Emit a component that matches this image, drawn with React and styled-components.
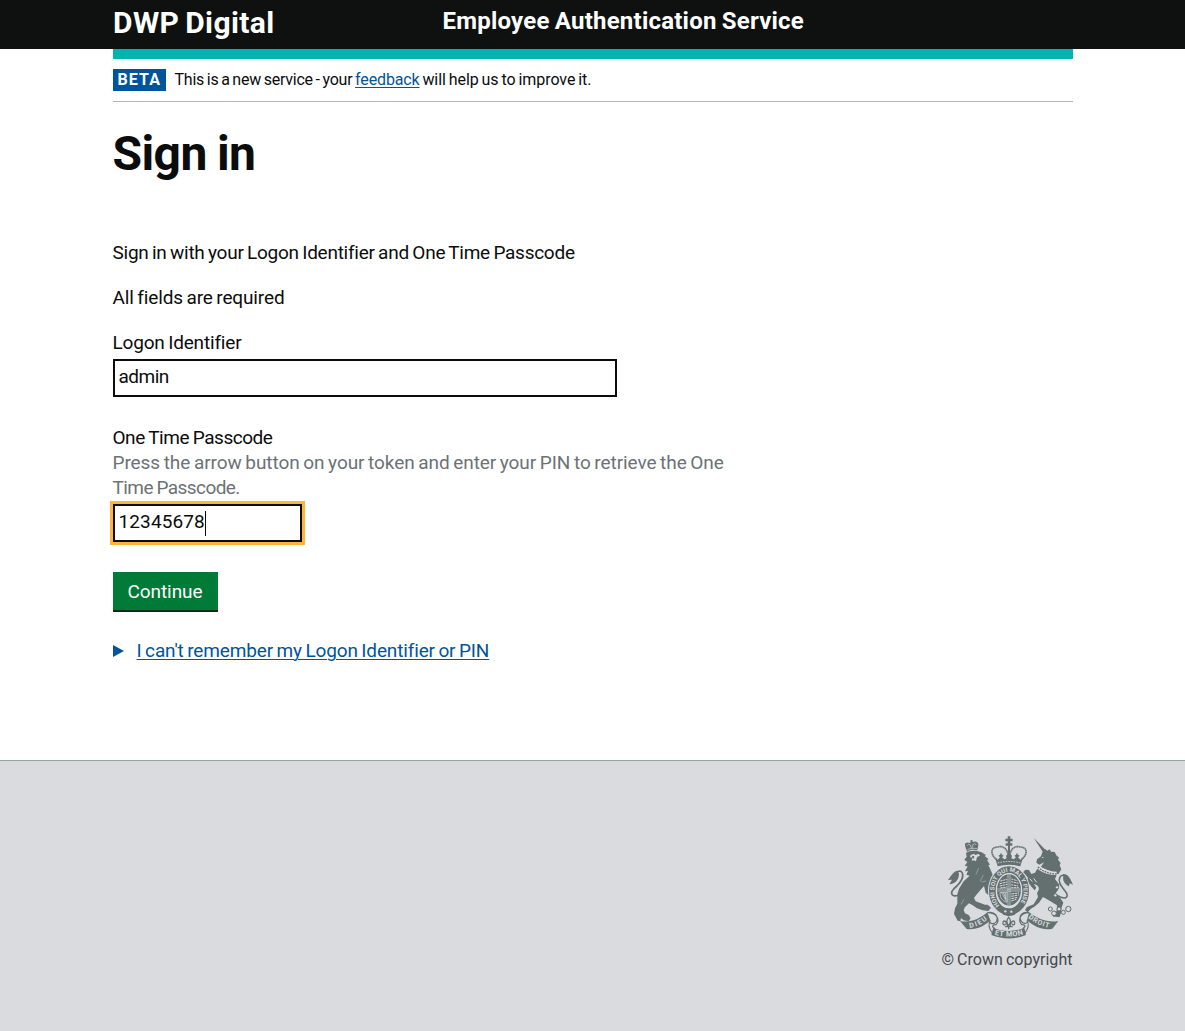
import React from "react";
import styled, { createGlobalStyle } from "styled-components";

const GlobalStyle = createGlobalStyle`
  * { box-sizing: border-box; }
  html, body { margin: 0; background: #fff; }
  body {
    font-family: Roboto, "Liberation Sans", sans-serif;
    font-size: 19px;
    line-height: 25px;
    color: #0b0c0c;
    word-spacing: -1px;
  }
`;

const Page = styled.div`
  min-height: 1031px;
  display: flex;
  flex-direction: column;
`;

const Container = styled.div`
  width: 960px;
  margin: 0 auto;
`;

const Text = styled.span`
  letter-spacing: ${(p) => p.$track || 0}px;
  word-spacing: ${(p) => (p.$words === undefined ? -1 : p.$words)}px;
`;

const Header = styled.header`
  background: #0e1110;
  height: 49px;
  color: #fff;
`;

const HeaderRow = styled(Container)`
  display: flex;
  align-items: flex-start;
`;

const Logo = styled.div`
  width: 330px;
  padding: 8px 0 0 0.5px;
  font-size: 30px;
  line-height: 30px;
  font-weight: 700;
  letter-spacing: 0.4px;
  word-spacing: -2px;
`;

const ServiceName = styled.div`
  padding-top: 6px;
  font-size: 24px;
  line-height: 30px;
  font-weight: 700;
  letter-spacing: 0.22px;
`;

const BrandBar = styled.div`
  height: 10px;
  background: #00b5b0;
`;

const PhaseBanner = styled.div`
  display: flex;
  align-items: flex-start;
  height: 43px;
  padding-top: 10px;
  border-bottom: 1px solid #b3b6b8;
  font-size: 16px;
  line-height: 22px;
  white-space: pre;
`;

const PhaseTag = styled.strong`
  width: 53px;
  height: 22px;
  margin-right: 9px;
  padding-left: 5px;
  background: #00549b;
  color: #fff;
  letter-spacing: 1.1px;
`;

const Link = styled.a`
  color: #00549b;
  text-decoration: underline;
  text-decoration-thickness: 1px;
  text-underline-offset: 2px;
`;

const Main = styled.main`
  padding-top: 27px;
  flex: 1;
`;

const Title = styled.h1`
  margin: 0 0 61px;
  font-size: 48px;
  line-height: 50px;
  font-weight: 700;
  letter-spacing: -0.6px;
`;

const Paragraph = styled.p`
  margin: 0 0 20px;
`;

const Field = styled.div`
  display: flex;
  flex-direction: column;
  align-items: flex-start;
  width: 630px;
  margin-bottom: ${(p) => p.$gap}px;
`;

const Hint = styled.span`
  color: #6b7276;
`;

const fieldBox = `
  height: 38px;
  margin: 4px 0 0;
  padding: 3px 4px 6px;
  border: 2px solid #0b0c0c;
  border-radius: 0;
  background: #fff;
`;

const TextInput = styled.input`
  ${fieldBox}
  width: 504px;
  font: inherit;
  color: #0b0c0c;
  letter-spacing: -0.5px;
  outline: none;
`;

const FocusedInput = styled.div`
  ${fieldBox}
  display: flex;
  width: 189px;
  padding: 3px 4px;
  outline: 3px solid #ffb43c;
  letter-spacing: 0.12px;
`;

const Caret = styled.span`
  width: 1px;
  height: 25px;
  margin-top: 2px;
  background: #0b0c0c;
`;

const Button = styled.button`
  display: block;
  width: 105px;
  height: 38px;
  margin: 0 0 28px;
  padding: 0;
  border: 0;
  background: #007a37;
  box-shadow: 0 2px 0 #002d18;
  color: #fff;
  font: inherit;
  letter-spacing: -0.06px;
`;

const Summary = styled.div`
  display: flex;
  align-items: center;
  color: #00549b;
  gap: 13px;
`;

const Footer = styled.footer`
  height: 271px;
  border-top: 1px solid #93a39f;
  background: #dadbdf;
`;

const FooterInner = styled(Container)`
  display: flex;
  flex-direction: column;
  align-items: flex-end;
  padding-top: 74px;
`;

const Copyright = styled.div`
  margin-top: 11px;
  font-size: 16px;
  line-height: 20px;
  letter-spacing: 0.03px;
  color: #43484b;
`;

function Crown() {
  return (
    <g>
      <path d="M218 34h8v7h7v8h-7v6h6v7h-20v-7h6v-6h-7v-8h7z" />
      <g fill="none" stroke="#647070" strokeWidth="5" strokeDasharray="4.6 1.2">
        <path d="M185 104C163 86 168 66 188 66 207 61 217 73 221 94" />
        <path d="M259 104C281 86 276 66 256 66 237 61 227 73 223 94" />
      </g>
      <path d="M219 60h6v42h-6z" />
      <path d="M180 98l8 6 7-7-5-5 5-3 3-6 3 6 5 3-5 5 7 6 7-3-2-8 9-9 9 9-2 8 7 3 7-6-5-5 5-3 3-6 3 6 5 3-5 5 7 7 8-6-8 26c-23-6-45-6-68 0z" />
      <path d="M188 114c24-6 45-6 68 0" fill="none" stroke="#dadbdf" strokeWidth="2.5" strokeDasharray="5 3" />
    </g>
  );
}

function Lion() {
  return (
    <g>
      <path d="M96 80L90 62C88 54 96 50 104 54L107 52 106 46 112 45 113 51C122 47 131 51 130 60L127 76C117 73 106 74 96 80z" />
      <path d="M96 62c2-4 7-5 10-2l3 9M124 60c-3-5-8-5-10-1l-2 9M97 74c9-4 19-5 29-3" stroke="#dadbdf" strokeWidth="2" fill="none" />
      <path d="M93 84C104 76 124 75 140 82L153 90 149 93 161 103 156 105 165 119 160 120 168 137 173 149 174 165 165 169 162 188 167 201 160 210 152 203 147 183 137 194 123 211 117 219 122 229 150 239 158 239 168 248 160 258 143 256 126 250 112 240 102 235 90 246 86 256 90 265 101 270 107 280 101 289 86 286 78 279 76 289 68 287 57 267 60 250 67 236 67 208 72 191 86 169 104 152 94 149 99 138 90 139 98 124 89 123 97 111 88 104 95 95z" />
      <path d="M107 90l10-4 3 4 11-3 4 5-9 4-3 13-7-3-6 1 2-8-7-3z" fill="#dadbdf" />
      <path d="M112 92l6 2-2 7-6-3z" />
      <path d="M73 209C51 219 44 206 56 192 72 178 89 161 82 144 77 134 66 139 62 146" fill="none" stroke="#647070" strokeWidth="5" />
      <path d="M68 137C57 138 50 149 39 165L51 164 43 178C60 176 72 165 72 146z" />
      <path d="M131 129l-8 19M145 150l-10 19M154 168l-15 3M87 223l-9 15" stroke="#dadbdf" strokeWidth="1.2" fill="none" />
    </g>
  );
}

function Unicorn() {
  return (
    <g>
      <path d="M296 38L334 77 326 85z" />
      <path d="M322 82L330 72 337 77 344 73 348 80 359 81 364 91 372 98 369 104 377 114 374 121 379 133 370 148 317 127 327 112 313 119 304 113 306 103 318 94z" />
      <path d="M320 96l7 0-4 4z" fill="#dadbdf" />
      <path d="M307 131C324 145 345 150 365 150L360 162 372 178C375 190 367 199 360 207L376 219 385 233 380 247 378 263 374 276 355 275 352 269 365 258 366 241 340 225 324 216 312 233 300 244 287 252 278 262 270 255 276 246 296 238 309 216 306 204C317 190 311 181 297 177L304 188 299 196 290 186 283 176 274 168 279 158 270 148 263 143 271 134 282 135 289 147 300 143z" />
      <path d="M310 123c16 15 35 20 55 20" fill="none" stroke="#dadbdf" strokeWidth="6" />
      <path d="M309 126c17 16 36 20 56 21" fill="none" stroke="#647070" strokeWidth="4" strokeDasharray="5 3" />
      <path d="M365 211C390 225 402 219 394 203 382 186 368 174 374 158 379 148 390 150 396 154" fill="none" stroke="#647070" strokeWidth="5" />
      <path d="M383 147C398 146 405 158 414 179L404 175 402 184C389 178 382 166 385 154z" />
      <path d="M284 161l8 9M296 160l9 12" stroke="#dadbdf" strokeWidth="3" />
      <g fill="#dadbdf" stroke="#647070" strokeWidth="3">
        <circle cx="366" cy="187" r="5" />
        <circle cx="361" cy="211" r="5" />
        <circle cx="346" cy="252" r="6" />
        <circle cx="357" cy="265" r="7" />
        <circle cx="372" cy="252" r="6" />
        <circle cx="385" cy="262" r="6" />
        <circle cx="400" cy="252" r="8" />
      </g>
    </g>
  );
}

function Garter() {
  return (
    <g>
      <ellipse cx="222" cy="197" rx="63" ry="76" fill="#dadbdf" />
      <ellipse cx="222" cy="197" rx="50" ry="63" fill="none" stroke="#647070" strokeWidth="20" />
      <ellipse cx="222" cy="197" rx="39" ry="52" fill="#dadbdf" />
      <ellipse cx="222" cy="195" rx="36" ry="47" />
      <g stroke="#dadbdf" strokeWidth="3" fill="none">
        <path d="M219 148v94M225 148v94M187 192h70M187 198h70" strokeWidth="2" />
        <path d="M196 168l20-5m-22 13l22-5m-22 12l22-5m-20 11l20-3" strokeDasharray="7 2" />
        <path d="M229 162l18 5m-18 3l22 5m-22 4l20 4m-20 5h24" strokeDasharray="6 2" />
        <path d="M195 203c0 17 8 25 21 29V202zM200 203l14 26M205 203l9 20M211 203v20" strokeWidth="2.2" />
        <path d="M229 207l23-3m-23 10l22-4m-22 11l19-4m-19 11l15-5" strokeDasharray="8 2" />
      </g>
      <path id="garterText" d="M194 241A44 57 0 1 1 250 241" fill="none" />
      <text fontFamily="Roboto, sans-serif" fontSize="18" fontWeight="700" fill="#dadbdf" wordSpacing="0">
        <textPath href="#garterText" textLength="244" lengthAdjust="spacingAndGlyphs">HONI SOIT QUI MAL Y PENSE</textPath>
      </text>
      <path d="M198 259l10-10 13 7 16-7 10 9-9 12-17 4-16-5z" />
      <circle cx="211" cy="259" r="3.5" fill="#dadbdf" />
      <circle cx="229" cy="260" r="3.5" fill="#dadbdf" />
    </g>
  );
}

function Scroll() {
  const lettering = { fontFamily: "Roboto, sans-serif", fontWeight: 700, fontSize: 21, fill: "#dadbdf" };
  return (
    <g>
      <path d="M75 288C106 294 134 282 157 262L166 286C149 304 122 316 95 312z" />
      <path d="M370 288C338 294 309 282 282 262L276 286C296 305 327 318 352 311z" />
      <g fill="#dadbdf" stroke="#647070" strokeWidth="3.5">
        <path d="M157 263C179 257 193 275 183 291 175 301 160 294 166 286 158 299 163 313 174 327L177 308C168 304 175 299 183 299 197 282 184 263 157 263z" />
        <path d="M282 263C259 257 250 275 259 289 267 300 282 294 276 286 284 299 278 314 268 327L265 309C275 304 269 299 260 299 247 283 257 263 282 263z" />
      </g>
      <path d="M175 308C206 321 237 321 268 308L273 330C240 344 204 344 169 330z" />
      <path id="dieu" d="M102 309C124 307 145 296 162 279" fill="none" />
      <path id="mon" d="M176 328C206 337 238 337 268 327" fill="none" />
      <path id="droit" d="M277 276C297 294 321 305 349 310" fill="none" />
      <text {...lettering}><textPath href="#dieu" startOffset="2" textLength="60">DIEU</textPath></text>
      <text {...lettering} fontSize="22" wordSpacing="0"><textPath href="#mon" startOffset="3" textLength="87">ET MON</textPath></text>
      <text {...lettering}><textPath href="#droit" startOffset="3" textLength="70">DROIT</textPath></text>
      <g fill="none" stroke="#647070" strokeWidth="4">
        <path d="M221 277c-8 9-7 17 0 25 7-8 8-16 0-25z" />
        <path d="M218 305c-2-18-15-23-14-9 1 6 8 4 7 0M225 305c2-18 15-23 14-9-1 6-8 4-7 0M210 305h23M221 304v9" />
      </g>
    </g>
  );
}

function Crest() {
  return (
    <svg width="125" height="104" viewBox="39 30 375 312" fill="#647070" aria-label="Royal coat of arms">
      <Scroll />
      <Lion />
      <Unicorn />
      <Garter />
      <Crown />
    </svg>
  );
}

export default function App() {
  return (
    <Page>
      <GlobalStyle />
      <Header>
        <HeaderRow>
          <Logo>DWP Digital</Logo>
          <ServiceName>Employee Authentication Service</ServiceName>
        </HeaderRow>
      </Header>
      <Container>
        <BrandBar />
        <PhaseBanner>
          <PhaseTag>BETA</PhaseTag>
          <Text $track={-0.24}>{"This is a new service - your "}</Text>
          <Link href="#"><Text $track={-0.14}>feedback</Text></Link>
          <Text $track={-0.06}>{" will help us to improve it."}</Text>
        </PhaseBanner>
      </Container>
      <Main>
        <Container>
          <Title>Sign in</Title>
          <Paragraph><Text $track={-0.26}>Sign in with your Logon Identifier and One Time Passcode</Text></Paragraph>
          <Paragraph><Text $track={-0.14}>All fields are required</Text></Paragraph>
          <Field $gap={28}>
            <Text as="label" htmlFor="logon" $track={-0.18}>Logon Identifier</Text>
            <TextInput id="logon" defaultValue="admin" />
          </Field>
          <Field $gap={30}>
            <Text $track={-0.46} $words={-0.5}>One Time Passcode</Text>
            <Hint>
              <Text $track={-0.07}>Press the arrow button on your token and enter your PIN to retrieve the One </Text>
              <br />
              <Text $track={-0.58} $words={-0.5}>Time Passcode.</Text>
            </Hint>
            <FocusedInput>
              12345678
              <Caret />
            </FocusedInput>
          </Field>
          <Button>Continue</Button>
          <Summary>
            <svg width="11" height="12" viewBox="0 0 11 12" fill="#00549b"><path d="M0 0L11 6L0 12z" /></svg>
            <Link href="#"><Text $track={-0.15}>I can't remember my Logon Identifier or PIN</Text></Link>
          </Summary>
        </Container>
      </Main>
      <Footer>
        <FooterInner>
          <Crest />
          <Copyright>© Crown copyright</Copyright>
        </FooterInner>
      </Footer>
    </Page>
  );
}
